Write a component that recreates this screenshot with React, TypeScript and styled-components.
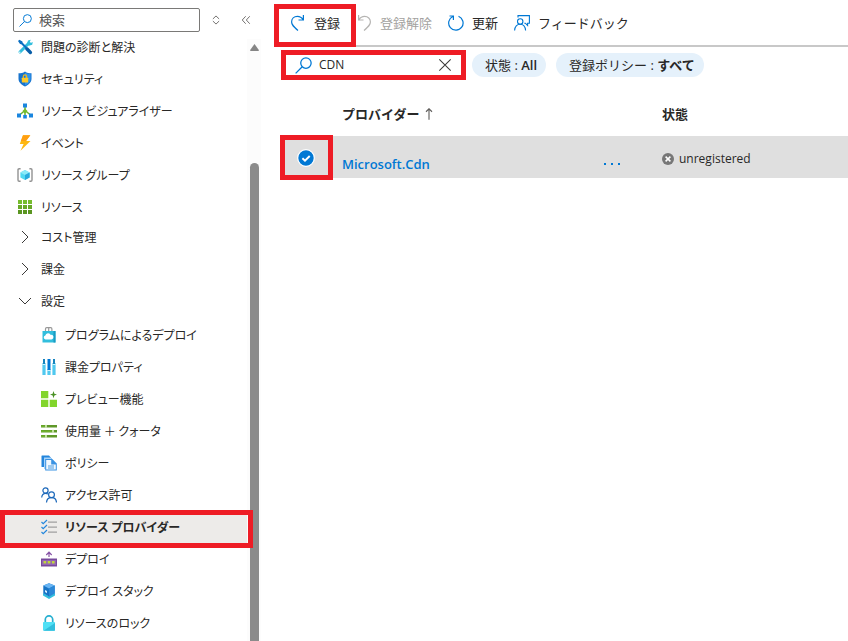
import React, { useState } from 'react';
import styled, { createGlobalStyle, css } from 'styled-components';

const RED = '#ee1c25';
const BLUE = '#0078d4';

const GlobalStyle = createGlobalStyle`
  * { box-sizing: border-box; }
  body {
    margin: 0;
    background: #fff;
    color: #292827;
    font-family: "Open Sans", "Noto Sans CJK JP", sans-serif;
    font-size: 13px;
    line-height: 20px;
  }
  button, input {
    font: inherit;
    color: inherit;
    border: 0;
    padding: 0;
    margin: 0;
    background: none;
  }
  button { cursor: pointer; }
  svg { display: block; flex: none; }
`;

const marked = css`
  position: relative;
  &::after {
    content: "";
    position: absolute;
    border: 5px solid ${RED};
    pointer-events: none;
    z-index: 2;
  }
`;

const Page = styled.div`
  display: flex;
  height: 100vh;
  overflow: hidden;
`;

/* ---------- side menu ---------- */

const Sidebar = styled.aside`
  display: flex;
  flex-direction: column;
  flex: none;
  width: 261px;
  font-family: "Noto Sans CJK JP", sans-serif;
  font-feature-settings: "palt";
`;

const SidebarHeader = styled.div`
  display: flex;
  align-items: flex-start;
  height: 31px;
  padding: 8px 0 0 13px;
`;

const MenuSearch = styled.label`
  display: flex;
  flex: none;
  align-items: center;
  gap: 7px;
  width: 187px;
  height: 24px;
  padding: 0 5px;
  border: 1px solid #7a7977;
  border-radius: 2px;
  margin-right: 6px;

  input {
    flex: 1;
    min-width: 0;
    outline: 0;
  }
  input::placeholder { color: #555; opacity: 1; }
`;

const SmallButton = styled.button`
  display: grid;
  flex: none;
  place-items: center;
  width: 20px;
  height: 24px;
  & + & { margin-left: 10px; }
`;

const SidebarBody = styled.div`
  display: flex;
  flex: 1;
  min-height: 0;
  overflow: hidden;
`;

const Menu = styled.nav`
  flex: 1;
  min-width: 0;
  font-size: 12px;
`;

const MenuLink = styled.a<{ $child?: boolean; $active?: boolean }>`
  display: flex;
  align-items: center;
  gap: 8px;
  height: 32px;
  padding-left: ${p => (p.$child ? 41 : 17)}px;
  color: inherit;
  text-decoration: none;
  white-space: nowrap;
  ${p => p.$active && css`
    ${marked}
    background: #edebe9;
    font-weight: 700;
    &::after { inset: -1px -6px -5px 0; }
  `}
`;

const Groups = styled.div`
  margin-top: -2px;
  padding-bottom: 2px;
`;

const GroupButton = styled.button`
  display: flex;
  align-items: center;
  gap: 8px;
  width: 100%;
  height: 32px;
  padding-left: 17px;
  text-align: left;
`;

const ScrollTrack = styled.div`
  display: flex;
  flex-direction: column;
  align-items: center;
  width: 14px;
  margin-top: 8px;
  padding-top: 5px;
  background: #fcfcfc;
`;

const ScrollThumb = styled.div`
  flex: 1;
  width: 9px;
  margin-top: 112px;
  border-radius: 5px 5px 0 0;
  background: #8b8b8b;
`;

/* ---------- content ---------- */

const Main = styled.main`
  flex: 1;
  min-width: 0;
`;

const Toolbar = styled.div`
  display: flex;
  align-items: center;
  gap: 16px;
  height: 47px;
  margin-left: 13px;
  padding-left: 16px;
  border-bottom: 2px solid #c8c8c8;
`;

const Command = styled.button<{ $marked?: boolean }>`
  display: flex;
  align-items: center;
  gap: 8px;
  height: 32px;
  white-space: nowrap;
  &:disabled { color: #a3a2a0; cursor: default; }
  ${p => p.$marked && css`
    ${marked}
    &::after { inset: -3px -16px -8px -16px; }
  `}
`;

const Filters = styled.div`
  display: flex;
  align-items: center;
  gap: 10px;
  padding: 3px 0 0 20px;
`;

const FilterSearch = styled.div`
  display: flex;
  align-items: center;
  width: 185px;
  height: 30px;
  margin-right: -4px;
  padding: 0 9px;
  border: 5px solid ${RED};

  label { display: flex; }
  input {
    flex: 1;
    min-width: 0;
    margin-left: 7px;
    font-size: 12px;
    outline: 0;
  }
`;

const Pill = styled.button`
  height: 24px;
  padding: 0 9px 0 13px;
  border-radius: 12px;
  background: #e5f1fb;
  white-space: nowrap;
  b { font-weight: 600; }
`;

const Table = styled.table`
  width: calc(100% - 20px);
  margin: 12px 0 0 20px;
  border-collapse: collapse;
  table-layout: fixed;
  text-align: left;

  th {
    height: 44px;
    padding: 0 0 0 9px;
    font-weight: 700;
  }
  td {
    height: 42px;
    padding: 0 0 0 9px;
    background: #dfdfdf;
  }
`;

const SelectHead = styled.th`width: 52px;`;
const ProviderHead = styled.th`width: 320px;`;

const SortLabel = styled.button`
  display: flex;
  align-items: center;
  gap: 4px;
  font-weight: 700;
`;

const CheckLabel = styled.label`
  ${marked}
  display: grid;
  place-items: center;
  width: 32px;
  height: 42px;
  padding-top: 2px;
  cursor: pointer;
  &::after { inset: -1px -11px -2px -10px; }
  input, svg { grid-area: 1 / 1; }
  input { appearance: none; width: 18px; height: 18px; }
  svg { pointer-events: none; }
`;

const ProviderCell = styled.div`
  display: flex;
  align-items: center;
  justify-content: space-between;
  padding: 14px 33px 0 0;
  a { color: ${BLUE}; font-weight: 600; text-decoration: none; }
  button { padding: 4px 0; }
`;

const Status = styled.div`
  display: flex;
  align-items: center;
  gap: 5px;
  padding-top: 3px;
  font-size: 12px;
`;

/* ---------- icons ---------- */

const Svg = ({ size = 16, children, ...rest }: { size?: number; children: React.ReactNode } & React.SVGProps<SVGSVGElement>) => (
  <svg width={size} height={size} viewBox="0 0 16 16" fill="none" aria-hidden="true" {...rest}>{children}</svg>
);

const SearchIcon = ({ size = 16 }: { size?: number }) => (
  <Svg size={size} stroke={BLUE} strokeWidth="1.2">
    <circle cx="10.3" cy="5.7" r="4.9" /><path d="M6.8 9.2.6 15.4" />
  </Svg>
);

const Tools = () => (
  <Svg>
    <path d="M3 13 12 4" stroke="#32bedd" strokeWidth="3" strokeLinecap="round" />
    <path d="M10 4.8 11 1.4 13.8.8 12.7 3l1 1 2.1-1-.6 2.8-3.4 1z" fill="#32bedd" />
    <path d="m1 2 1.4-1.3 3 1.7.3 1.4 4 4-1.4 1.4-4-4L3 5z" fill="#0b6fc2" />
    <path d="m9.8 9.8 3.6 3.7" stroke="#075da8" strokeWidth="3.4" strokeLinecap="round" />
    <circle cx="2.8" cy="13.2" r=".7" fill="#fff" />
  </Svg>
);

const Shield = () => (
  <Svg>
    <path d="M8 .5c2 1.5 4 1.7 6.5 1.8v5.500c0 4-3.500 6.300-6.500 7.800-3-1.500-6.500-3.800-6.500-7.800V2.300C4 2.200 6 2 8 .5z" fill="#1874cd" />
    <path d="M8 1.500c2 1.300 3.700 1.500 5.600 1.600v4.700c0 3.400-2.900 5.400-5.600 6.800z" fill="#2f94ee" />
    <path d="M6.300 7V5.600a1.700 1.700 0 0 1 3.400 0V7" stroke="#f5b91b" strokeWidth="1.2" />
    <rect x="4.800" y="6.700" width="6.400" height="4.700" rx=".6" fill="#ffca28" />
  </Svg>
);

const Visualizer = () => (
  <Svg>
    <path d="M8 4v8M8 7.500 2.500 12M8 7.500l5.500 4.500" stroke="#6bb52c" strokeWidth="1.5" />
    <path d="M8 5.500 10.500 8 8 10.500 5.500 8z" fill="#76bc2d" />
    <path d="M6 .5h4v4H6zM0 10.500h4v4H0zM12 10.500h4v4h-4zM6.200 12h3.600v3.600H6.200z" fill="#1a86df" />
  </Svg>
);

const Bolt = () => (
  <Svg>
    <path d="M6 .3h7.300L9 6h4.500L3.500 15.800 6.600 9H2.800z" fill="#fdb813" />
    <path d="M6 .3h7.300L9 6H3.900z" fill="#ff9f12" />
  </Svg>
);

const ResourceGroup = () => (
  <Svg>
    <path d="M3.600 1.800H2.200Q1 1.800 1 3v10q0 1.200 1.200 1.200h1.400M12.400 1.800h1.400Q15 1.800 15 3v10q0 1.200-1.200 1.200h-1.400" stroke="#929292" strokeWidth="1.4" />
    <path d="m8 3 4.600 2.500v5L8 13l-4.600-2.500v-5z" fill="#50d9f2" />
    <path d="m8 3 4.600 2.500L8 8 3.400 5.500z" fill="#8ceaf8" />
    <path d="M8 8v5l4.600-2.500v-5z" fill="#28a9dd" />
  </Svg>
);

const Grid = () => (
  <Svg>
    <path d="M1 1h4v4H1zM6 1h4v4H6zM11 1h4v4h-4z" fill="#76bc2d" />
    <path d="M1 6h4v4H1zM6 6h4v4H6zM11 6h4v4h-4z" fill="#68a927" />
    <path d="M1 11h4v4H1zM6 11h4v4H6zM11 11h4v4h-4z" fill="#5a9521" />
  </Svg>
);

const Chevron = ({ open }: { open: boolean }) => (
  <Svg stroke="#3b3a39" strokeWidth="1">
    <path d={open ? 'm2 5 6 6 6-6' : 'm5 2 6 6-6 6'} />
  </Svg>
);

const Bag = () => (
  <Svg>
    <path d="M4.500 4V2Q4.500.7 5.700.7h4Q10.900.7 10.900 2v2M7.700 4V1" stroke="#999" strokeWidth="1.2" />
    <path d="M1.500 4h13v11.500h-13z" fill="#32bedd" /><path d="M12.500 4h2v11.500h-2z" fill="#199bc2" />
    <path d="M4.500 12.500a2.100 2.100 0 0 1-.2-4.100 2.900 2.900 0 0 1 5.500-.5 2.300 2.300 0 0 1 .7 4.600z" fill="#fff" />
  </Svg>
);

const Sliders = () => (
  <Svg>
    <path d="M3 4v12M13 4v12M8 10v6" stroke="#50c8ef" strokeWidth="3.2" />
    <path d="M3 0v6M13 0v6" stroke="#1583bd" strokeWidth="2" />
    <path d="M8 0v11" stroke="#0078d4" strokeWidth="3" />
    <path d="M1.400 5.500h3.200M6.400 11.500h3.200M11.400 5.500h3.200" stroke="#c9f2ff" />
  </Svg>
);

const Preview = () => (
  <Svg>
    <path d="M0 0h7.300v7.300H0zM0 8.700h7.300V16H0zM8.700 8.700H16V16H8.700z" fill="#82d52c" />
    <path d="m12.500 0 .9 2.700 2.600.9-2.600.9-.9 2.700-.9-2.700L9 3.600l2.600-.9z" fill="#4b9226" />
  </Svg>
);

const Usage = () => (
  <Svg>
    <path d="M0 3.200h16M0 8.200h16M0 13.200h16" stroke="#5f9828" strokeWidth="2.4" />
    <path d="M0 3.200h5M0 8.200h11M0 13.200h5" stroke="#76bc2d" />
    <path d="M5 1.700v3M12 6.700v3M5 11.700v3" stroke="#d7efbb" strokeWidth="1.6" />
  </Svg>
);

const Policy = () => (
  <Svg>
    <path d="M.5 1q0-.5.5-.5h7L11 4v8H1q-.5 0-.5-.5z" fill="#2586dc" />
    <path d="M3 2.500h6.500L13 6v8H3z" fill="#a8d4fa" />
    <path d="M4.200 4h7l4.600 4.500v7H4.200z" fill="#3a93e3" />
    <path d="M5.200 5h5v4.500h4.600v5H5.200z" fill="#f0f8ff" />
    <path d="M7 11h6M7 13h6" stroke="#4d9ce0" />
  </Svg>
);

const People = () => (
  <Svg stroke="#1c68ba" strokeWidth="1.2">
    <circle cx="4.500" cy="3.500" r="2.600" /><path d="M.7 10.500c.2-2.700 1.700-4.200 4-4.200 1 0 1.700.3 2.300.8" />
    <circle cx="10.500" cy="7.800" r="2.900" /><path d="M5.500 15.500c.2-3 2-4.800 5-4.800s4.800 1.800 5 4.800" />
  </Svg>
);

const Checklist = () => (
  <Svg>
    <path d="M7 3.200h9M7 8.200h9M7 13.200h9" stroke="#a0a0a0" strokeWidth="1.3" />
    <path d="m.5 3 1.700 1.700L6 1M.5 8l1.700 1.700L6 6M.5 13l1.700 1.700L6 11" stroke="#2587dd" strokeWidth="1.2" />
  </Svg>
);

const Deploy = () => (
  <Svg>
    <path d="M8 6V1.500M5.300 4 8 1.200 10.700 4" stroke="#8753a6" strokeWidth="1.2" />
    <path d="M0 7.500h16V15.500H0z" fill="#764a9b" /><path d="M1 9h14v5H1z" fill="#9364b4" />
    <path d="M2.500 10h2.700v2.600H2.500zM6.700 10h2.700v2.600H6.700zM10.900 10h2.700v2.600h-2.700z" fill="#bfd63b" />
  </Svg>
);

const Stack = () => (
  <Svg>
    <path d="m2 10 6 3 6-3v2.500L8 16l-6-3.500z" fill="#32bedd" />
    <path d="m8 .3 5.700 2.300v7.600L8 13.500l-5.700-3.300V2.600z" fill="#1673c5" />
    <path d="m8 .3 5.700 2.300L8 5.500 2.300 2.600z" fill="#69b5f4" /><path d="M8 5.500v8l5.700-3.300V2.600z" fill="#2b88d8" />
    <path d="m4 7 2 .9v2.300L4 9z" fill="#d9efff" />
  </Svg>
);

const Lock = () => (
  <Svg>
    <path d="M4.300 8V4.600a3.700 3.700 0 0 1 7.400 0V8" stroke="#26afd0" strokeWidth="1.7" />
    <rect x="2" y="7" width="12" height="8.700" rx=".8" fill="#50e0f5" /><path d="M2.500 15.700 14 8v7q0 .7-.7.7z" fill="#32bedd" />
  </Svg>
);

const Redo = () => (
  <Svg stroke={BLUE} strokeWidth="1.2">
    <path d="M13.400 0V5H8.500M13.200 4.800C11.800 2.600 9.800 1.400 7.400 1.400 4 1.400 1.600 3.700 1.600 7c0 2.800 1.800 4.400 6.400 8.500" />
  </Svg>
);

const Undo = () => (
  <Svg stroke="#b5b4b2" strokeWidth="1.2">
    <path d="M2.600 0V5H7.500M2.800 4.800C4.200 2.600 6.200 1.400 8.600 1.400c3.400 0 5.800 2.300 5.800 5.600 0 2.800-1.800 4.400-6.400 8.500" />
  </Svg>
);

const Refresh = () => (
  <Svg stroke={BLUE} strokeWidth="1.2">
    <path d="M10.500 1.300A7.200 7.200 0 1 1 4.800 1.500M1.500 1h3.900v4" />
  </Svg>
);

const Feedback = () => (
  <Svg stroke={BLUE} strokeWidth="1.1">
    <path d="M4 2.500V.6h11.400v7.600h-1.800v2.300L11.300 8.200h-1" /><circle cx="6.200" cy="6.500" r="2.700" />
    <path d="M.6 15.500c.3-3.500 2.400-6.200 5.600-6.200s5.100 2.700 5.400 6.200" />
  </Svg>
);

const topItems = [
  { label: '問題の診断と解決', Icon: Tools },
  { label: 'セキュリティ', Icon: Shield },
  { label: 'リソース ビジュアライザー', Icon: Visualizer },
  { label: 'イベント', Icon: Bolt },
  { label: 'リソース グループ', Icon: ResourceGroup },
  { label: 'リソース', Icon: Grid },
];

const groups = [
  { label: 'コスト管理', open: false },
  { label: '課金', open: false },
  { label: '設定', open: true },
];

const settings = [
  { label: 'プログラムによるデプロイ', Icon: Bag },
  { label: '課金プロパティ', Icon: Sliders },
  { label: 'プレビュー機能', Icon: Preview },
  { label: '使用量 ＋ クォータ', Icon: Usage },
  { label: 'ポリシー', Icon: Policy },
  { label: 'アクセス許可', Icon: People },
  { label: 'リソース プロバイダー', Icon: Checklist, active: true },
  { label: 'デプロイ', Icon: Deploy },
  { label: 'デプロイ スタック', Icon: Stack },
  { label: 'リソースのロック', Icon: Lock },
];

export default function App() {
  const [query, setQuery] = useState('CDN');
  const [checked, setChecked] = useState(true);

  return (
    <>
      <GlobalStyle />
      <Page>
        <Sidebar>
          <SidebarHeader>
            <MenuSearch>
              <SearchIcon size={13} />
              <input type="text" placeholder="検索" aria-label="検索" />
            </MenuSearch>
            <SmallButton aria-label="展開">
              <Svg size={10} stroke="#605e5c" strokeWidth="1.4"><path d="M3 6.300 8 1.500l5 4.800M3 9.700l5 4.800 5-4.800" /></Svg>
            </SmallButton>
            <SmallButton aria-label="折りたたむ">
              <Svg size={10} stroke="#605e5c" strokeWidth="1.4"><path d="M7.500 2 2 8l5.500 6M14 2 8.500 8l5.500 6" /></Svg>
            </SmallButton>
          </SidebarHeader>
          <SidebarBody>
            <Menu>
              {topItems.map(({ label, Icon }) => (
                <MenuLink key={label} href="#"><Icon />{label}</MenuLink>
              ))}
              <Groups>
                {groups.map(g => (
                  <GroupButton key={g.label} aria-expanded={g.open}><Chevron open={g.open} />{g.label}</GroupButton>
                ))}
              </Groups>
              {settings.map(({ label, Icon, active }) => (
                <MenuLink key={label} href="#" $child $active={active} aria-current={active ? 'page' : undefined}>
                  <Icon />{label}
                </MenuLink>
              ))}
            </Menu>
            <ScrollTrack aria-hidden="true">
              <svg width="9" height="7" viewBox="0 0 9 7"><path d="M4.500 0 9 6.200Q9 7 8 7H1Q0 7 0 6.200z" fill="#858585" /></svg>
              <ScrollThumb />
            </ScrollTrack>
          </SidebarBody>
        </Sidebar>

        <Main>
          <Toolbar>
            <Command $marked><Redo /><span>登録</span></Command>
            <Command disabled><Undo /><span>登録解除</span></Command>
            <Command><Refresh /><span>更新</span></Command>
            <Command><Feedback /><span>フィードバック</span></Command>
          </Toolbar>
          <Filters>
            <FilterSearch>
              <label htmlFor="provider-search" aria-label="検索"><SearchIcon size={17} /></label>
              <input id="provider-search" type="text" value={query} onChange={e => setQuery(e.target.value)} />
              <button aria-label="クリア" onClick={() => setQuery('')}>
                <Svg size={14} stroke="#3b3a39" strokeWidth="1.2"><path d="m1.500 1.500 13 13M14.500 1.500l-13 13" /></Svg>
              </button>
            </FilterSearch>
            <Pill>状態 : <b>All</b></Pill>
            <Pill>登録ポリシー : <b>すべて</b></Pill>
          </Filters>
          <Table>
            <thead>
              <tr>
                <SelectHead aria-label="選択" />
                <ProviderHead aria-sort="ascending">
                  <SortLabel>
                    プロバイダー
                    <Svg size={12} stroke="#605e5c" strokeWidth="1.5"><path d="M8 15.500V1M4 5l4-4 4 4" /></Svg>
                  </SortLabel>
                </ProviderHead>
                <th>状態</th>
              </tr>
            </thead>
            <tbody>
              <tr>
                <td>
                  <CheckLabel>
                    <input type="checkbox" aria-label="Microsoft.Cdn" checked={checked} onChange={e => setChecked(e.target.checked)} />
                    <Svg size={18}>
                      <circle cx="8" cy="8" r="7.400" fill={checked ? BLUE : '#fff'} stroke="#fff" strokeWidth="1.1" />
                      {checked && <path d="m4.800 8.200 2.300 2.200 4.200-4.200" stroke="#fff" strokeWidth="1.7" />}
                    </Svg>
                  </CheckLabel>
                </td>
                <td>
                  <ProviderCell>
                    <a href="#">Microsoft.Cdn</a>
                    <button aria-label="その他">
                      <svg width="16" height="4" viewBox="0 0 16 4" fill={BLUE}><path d="M0 1h2v2H0zM7 1h2v2H7zM14 1h2v2h-2z" /></svg>
                    </button>
                  </ProviderCell>
                </td>
                <td>
                  <Status>
                    <Svg size={12}><circle cx="8" cy="8" r="8" fill="#777" /><path d="m4.800 4.800 6.400 6.400M11.200 4.800l-6.400 6.400" stroke="#fff" strokeWidth="2" /></Svg>
                    unregistered
                  </Status>
                </td>
              </tr>
            </tbody>
          </Table>
        </Main>
      </Page>
    </>
  );
}
